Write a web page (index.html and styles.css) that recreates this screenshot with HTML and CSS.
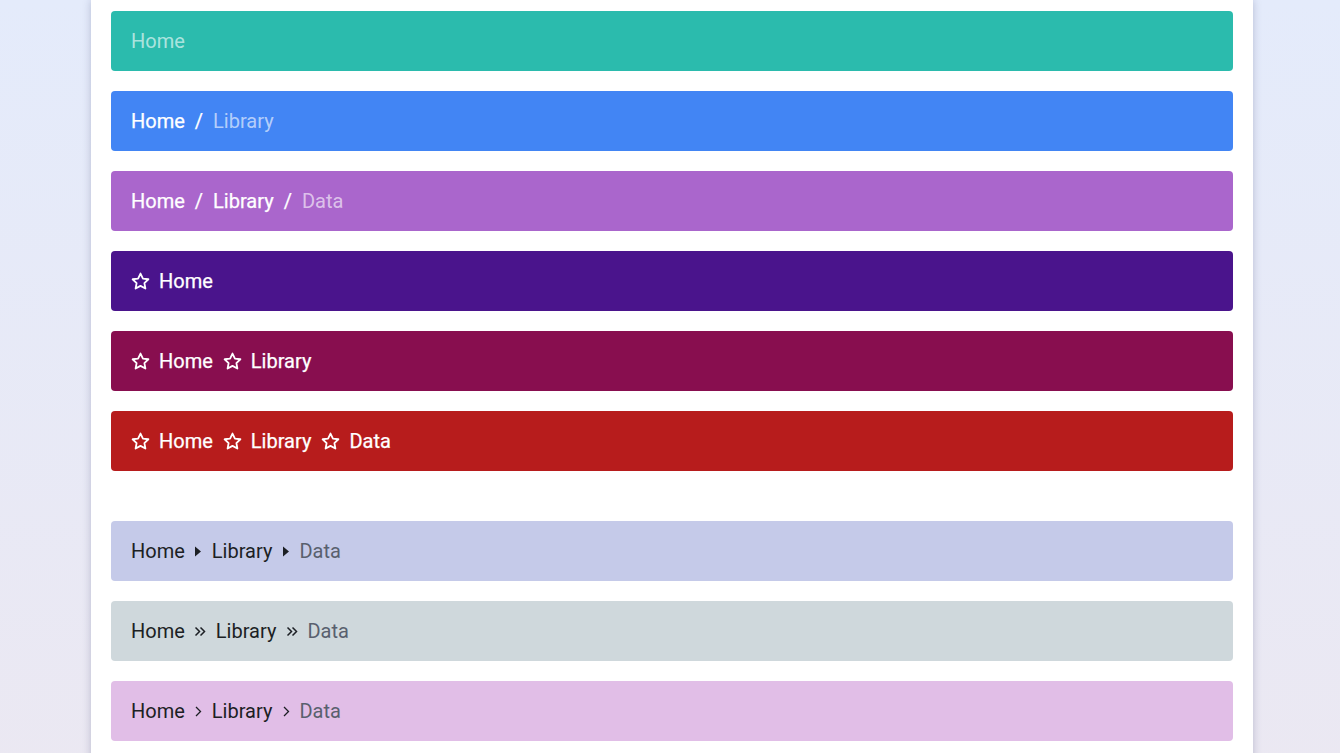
FILE: index.html
```html
<!DOCTYPE html>
<html lang="en">
<head>
<meta charset="utf-8">
<title>Breadcrumbs</title>
<link rel="stylesheet" href="styles.css">
</head>
<body>
<main class="card">
  <section class="group">
    <nav class="crumbs teal"><span class="active">Home</span></nav>
    <nav class="crumbs blue"><a>Home</a><span class="sep">/</span><span class="active">Library</span></nav>
    <nav class="crumbs violet"><a>Home</a><span class="sep">/</span><a>Library</a><span class="sep">/</span><span class="active">Data</span></nav>
    <nav class="crumbs deep-purple star-row">
      <a class="starred"><svg class="star" viewBox="0 0 20 20"><path d="M10 1.6l2.55 5.3 5.75.75-4.2 4 1.05 5.75L10 14.6l-5.15 2.8 1.05-5.75-4.2-4 5.75-.75z"/></svg>Home</a>
    </nav>
    <nav class="crumbs wine star-row">
      <a class="starred"><svg class="star" viewBox="0 0 20 20"><path d="M10 1.6l2.55 5.3 5.75.75-4.2 4 1.05 5.75L10 14.6l-5.15 2.8 1.05-5.75-4.2-4 5.75-.75z"/></svg>Home</a>
      <a class="starred"><svg class="star" viewBox="0 0 20 20"><path d="M10 1.6l2.55 5.3 5.75.75-4.2 4 1.05 5.75L10 14.6l-5.15 2.8 1.05-5.75-4.2-4 5.75-.75z"/></svg>Library</a>
    </nav>
    <nav class="crumbs red star-row">
      <a class="starred"><svg class="star" viewBox="0 0 20 20"><path d="M10 1.6l2.55 5.3 5.75.75-4.2 4 1.05 5.75L10 14.6l-5.15 2.8 1.05-5.75-4.2-4 5.75-.75z"/></svg>Home</a>
      <a class="starred"><svg class="star" viewBox="0 0 20 20"><path d="M10 1.6l2.55 5.3 5.75.75-4.2 4 1.05 5.75L10 14.6l-5.15 2.8 1.05-5.75-4.2-4 5.75-.75z"/></svg>Library</a>
      <a class="starred"><svg class="star" viewBox="0 0 20 20"><path d="M10 1.6l2.55 5.3 5.75.75-4.2 4 1.05 5.75L10 14.6l-5.15 2.8 1.05-5.75-4.2-4 5.75-.75z"/></svg>Data</a>
    </nav>
  </section>
  <section class="group light">
    <nav class="crumbs indigo">
      <a>Home</a>
      <svg class="sep-icon caret" viewBox="0 0 8 12"><path d="M1 1v10l6-5z"/></svg>
      <a>Library</a>
      <svg class="sep-icon caret" viewBox="0 0 8 12"><path d="M1 1v10l6-5z"/></svg>
      <span class="active">Data</span>
    </nav>
    <nav class="crumbs bluegrey">
      <a>Home</a>
      <svg class="sep-icon dbl" viewBox="0 0 12 12"><path d="M1.5 2l4 4-4 4M6.5 2l4 4-4 4"/></svg>
      <a>Library</a>
      <svg class="sep-icon dbl" viewBox="0 0 12 12"><path d="M1.5 2l4 4-4 4M6.5 2l4 4-4 4"/></svg>
      <span class="active">Data</span>
    </nav>
    <nav class="crumbs lilac">
      <a>Home</a>
      <svg class="sep-icon chev" viewBox="0 0 8 12"><path d="M2 1.5l4.5 4.5-4.5 4.5"/></svg>
      <a>Library</a>
      <svg class="sep-icon chev" viewBox="0 0 8 12"><path d="M2 1.5l4.5 4.5-4.5 4.5"/></svg>
      <span class="active">Data</span>
    </nav>
  </section>
</main>
</body>
</html>
```
FILE: styles.css
```css
html, body {
  margin: 0;
  padding: 0;
}
body {
  min-height: 753px;
  background: linear-gradient(180deg, #e4ebfb 0%, #ebe8f2 100%);
  font-family: Roboto, "Liberation Sans", Arial, sans-serif;
}
.card {
  width: 1122px;
  margin: 0 0 0 91px;
  padding: 11px 20px 20px;
  background: #fff;
  box-shadow: 0 0 8px rgba(60, 70, 110, 0.28);
  min-height: 740px;
}
.group {
  display: flex;
  flex-direction: column;
  gap: 20px;
}
.group + .group {
  margin-top: 50px;
}
.crumbs {
  height: 60px;
  box-sizing: border-box;
  padding: 0 20px;
  border-radius: 4px;
  display: flex;
  align-items: center;
  font-size: 20px;
  color: #fff;
  font-weight: 400;
}
.crumbs a {
  color: inherit;
  -webkit-text-stroke: 0.25px #fff;
}
.sep {
  margin: 0 10px;
  -webkit-text-stroke: 0.25px #fff;
}
.active {
  font-weight: 400;
  color: rgba(255, 255, 255, 0.62);
}
.teal { background: #2bbbad; }
.blue { background: #4285f4; }
.violet { background: #aa66cc; }
.deep-purple { background: #4a148c; }
.wine { background: #880e4f; }
.red { background: #b71c1c; }
.star-row {
  gap: 10px;
}
.starred {
  display: flex;
  align-items: center;
  gap: 9px;
}
.star {
  width: 19px;
  height: 19px;
  fill: none;
  stroke: #fff;
  stroke-width: 1.9;
  stroke-linejoin: round;
}
.light .crumbs {
  font-weight: 400;
  color: #1c1f24;
}
.light .crumbs a {
  -webkit-text-stroke: 0;
}
.light .active {
  color: #59606e;
}
.indigo { background: #c5cae9; }
.bluegrey { background: #cfd8dc; }
.lilac { background: #e1bee7; }
.sep-icon {
  margin: 0 9.5px;
  height: 13px;
}
.caret {
  width: 8px;
  fill: #1c1f24;
}
.dbl {
  width: 12px;
  fill: none;
  stroke: #1c1f24;
  stroke-width: 1.5;
}
.chev {
  width: 8px;
  fill: none;
  stroke: #1c1f24;
  stroke-width: 1.3;
}
```
